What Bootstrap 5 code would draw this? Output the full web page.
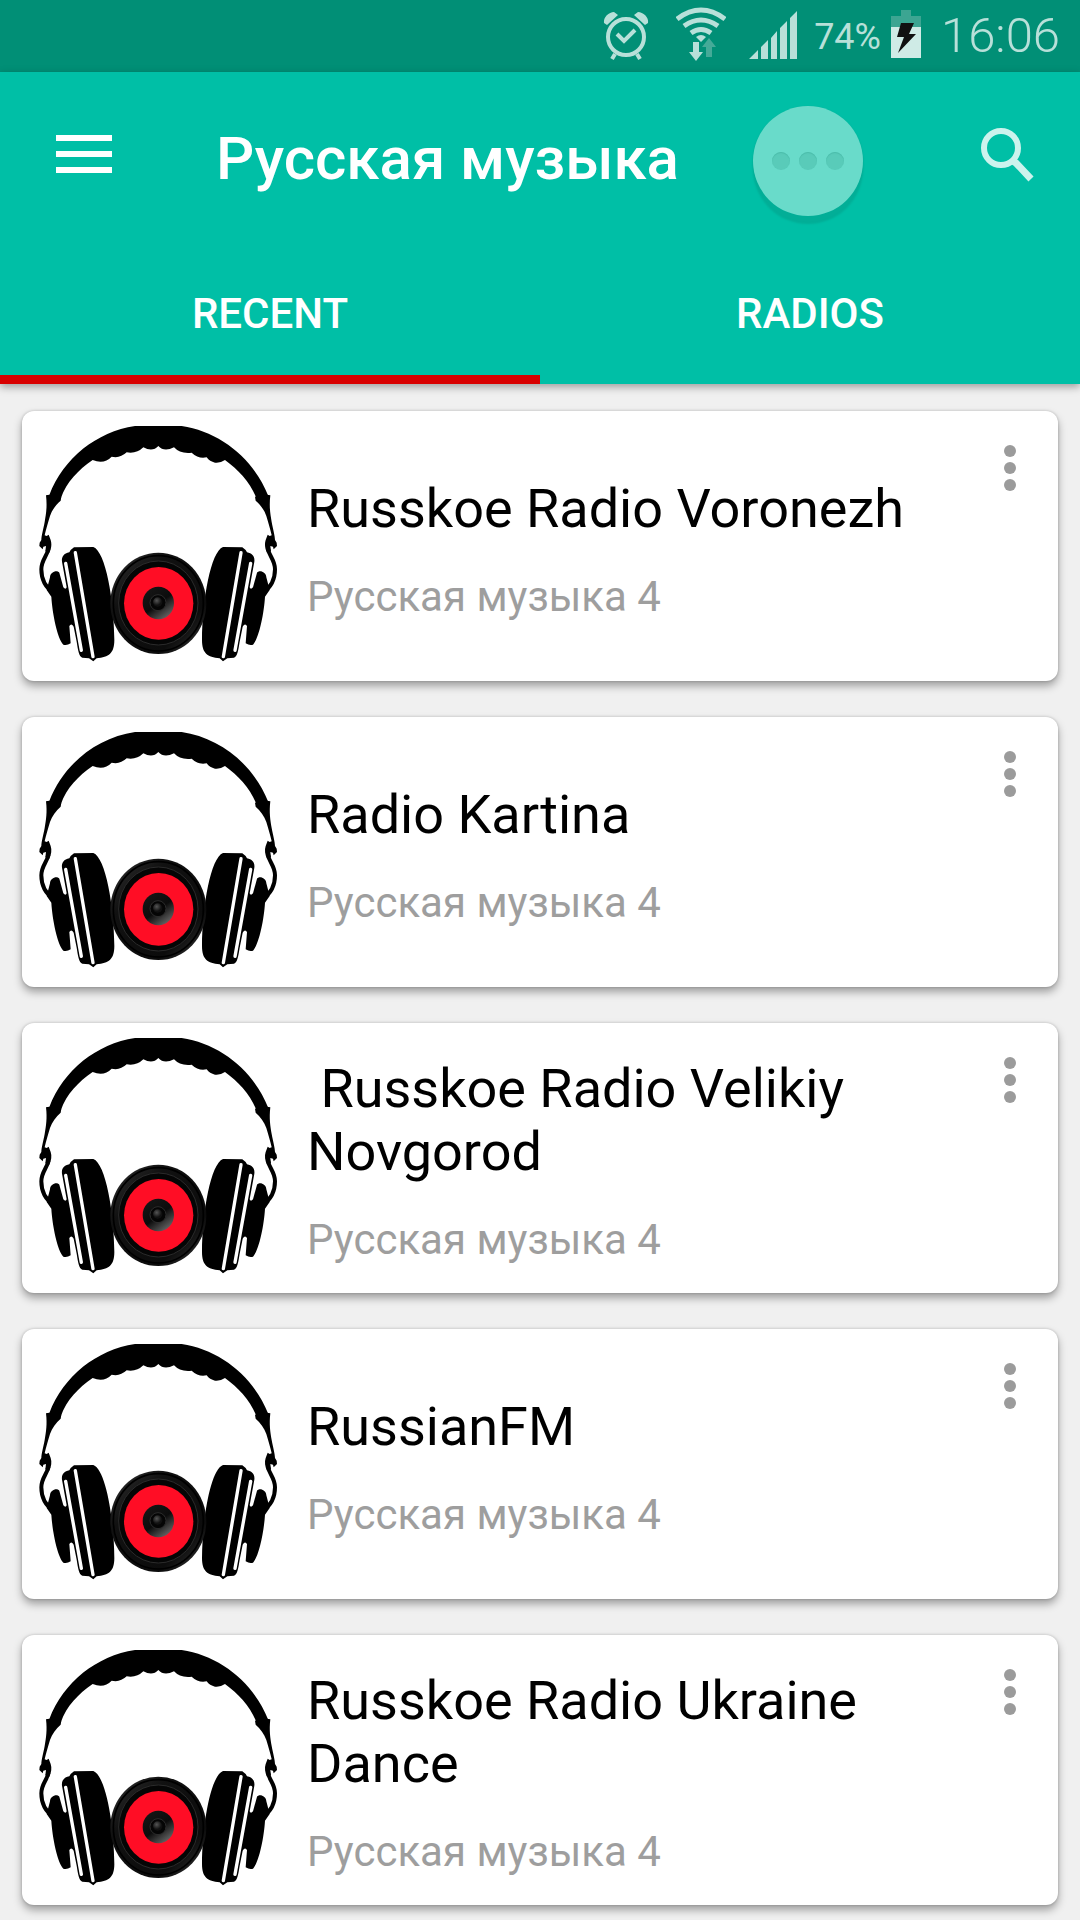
<!DOCTYPE html>
<html lang="ru">
<head>
<meta charset="utf-8">
<meta name="viewport" content="width=device-width, initial-scale=1">
<title>Русская музыка</title>
<link href="https://cdn.jsdelivr.net/npm/bootstrap@5.3.0/dist/css/bootstrap.min.css" rel="stylesheet">
<style>
  body { font-family: Roboto, "Noto Sans", sans-serif; background: #f0f0f0; color: #000; }
  svg { display: block; flex: none; }
  .status-bar { height: 72px; background: #018f76; color: #b8e0d9; padding-right: 20px; font-weight: 300; }
  .status-wifi { margin-left: 25px; }
  .status-signal { margin-left: 22px; }
  .status-percent { font-size: 36px; line-height: 40px; padding-top: 2px; margin-left: 16px; font-weight: 400; }
  .status-battery { margin-left: 10px; }
  .status-clock { font-size: 49px; line-height: 72px; margin-left: 20px; }
  .app-header { background: #00bfa6; color: #fff; box-shadow: 0 3px 8px rgba(0,0,0,.35); z-index: 2; }
  .app-bar { height: 168px; padding: 0 21px 0 32px; }
  .bar-btn { width: 104px; height: 104px; margin-top: 30px; }
  .app-title { font-size: 60px; line-height: 72px; font-weight: 500; margin: 0 0 0 80px; padding-top: 6px; }
  .assist-btn { right: 217px; top: 34px; width: 110px; height: 110px; background: #69dbca; box-shadow: 0 8px 2px #02ae97, 0 1px 2px #02a58f; gap: 9px; }
  .assist-dot { width: 18px; height: 18px; border-radius: 50%; background: #59cbb9; box-shadow: inset 0 1px 1px #4bbcaa; }
  .tab-link { height: 144px; font-size: 42px; line-height: 48px; font-weight: 500; color: #fff; text-decoration: none; border-bottom: 9px solid transparent; padding-top: 12px; }
  .tab-link.active { border-bottom-color: #d80000; }
  .station-list { padding: 27px 22px 15px; gap: 36px; }
  .station { min-height: 270px; padding: 13px 12px 17px 16px; border: 0; border-radius: 12px; box-shadow: 0 5px 9px rgba(0,0,0,.34), 0 0 3px rgba(0,0,0,.2); }
  .station-body { margin-left: 29px; gap: 32px; padding-top: 10px; }
  .station-name { font-size: 54px; line-height: 63px; font-weight: 400; margin: 0; }
  .station-group { font-size: 42px; line-height: 50px; color: #9e9e9e; margin: 0; }
  .more-btn { width: 72px; height: 72px; margin-top: 8px; }
</style>
<script src="https://cdn.jsdelivr.net/npm/bootstrap@5.3.0/dist/js/bootstrap.bundle.min.js"></script>
</head>
<body>
<svg width="0" height="0" class="position-absolute" aria-hidden="true">
  <defs>
    <linearGradient id="rim" x1="0" y1="0" x2="1" y2="1">
      <stop offset="0" stop-color="#333"/><stop offset=".3" stop-color="#111"/><stop offset=".75" stop-color="#0c0c0c"/><stop offset="1" stop-color="#3a3a3a"/>
    </linearGradient>
    <linearGradient id="cone" x1=".2" y1=".1" x2=".8" y2=".95">
      <stop offset="0" stop-color="#151515"/><stop offset=".5" stop-color="#0c0c0c"/><stop offset="1" stop-color="#666"/>
    </linearGradient>
    <radialGradient id="cap" cx=".4" cy=".35"><stop offset="0" stop-color="#555"/><stop offset="1" stop-color="#111"/></radialGradient>
    <g id="cup" transform="translate(42 270)">
      <path d="M36 16L46 14L82 20L80 32C66 44 54 60 48 78C42 98 36 118 32 136L38 138L44 134L50 150C54 162 52 176 46 188L34 184L36 168L28 170L26 178L16 168L17 158L22 150C22 138 28 118 32 96C36 72 40 50 36 16Z"/>
      <path d="M43 176C40 198 22 210 22 238C22 270 34 292 58 308" fill="none" stroke="#000" stroke-width="12"/>
      <path d="M110 180L120 172L178 171C215 185 240 330 241 450C241 490 225 501 188 505L178 514L165 505L145 503C135 500 132 480 128 455L119 410Q112 398 106 408L110 460Q98 468 88 464C70 445 55 370 52 320L38 300L48 262C48 245 70 238 76 248L88 292Q95 300 98 292L84 215C82 200 90 190 106 187Z"/>
      <path d="M124 188L177 500M95 220L142 481" fill="none" stroke="#fff" stroke-width="10" stroke-linecap="round"/>
    </g>
    <symbol id="headphones" viewBox="54 72 720 720">
      <path d="M82 296L88 285C130 175 230 95 345 78L485 78C600 95 700 175 745 288L710 296C690 245 655 210 615 180Q600 190 585 188Q569 185 560 172Q536 178 515 158Q480 162 462 142Q432 157 415 138Q398 157 370 142Q350 162 320 157Q300 176 275 170Q252 194 218 180C175 210 140 245 122 296Z"/>
      <use href="#cup"/>
      <use href="#cup" transform="translate(829) scale(-1 1)"/>
      <ellipse cx="415" cy="610" rx="144" ry="152" fill="url(#rim)"/>
      <ellipse cx="415" cy="610" rx="135" ry="143" fill="none" stroke="#000" stroke-width="5"/>
      <ellipse cx="415" cy="609" rx="119" ry="126" fill="#050505" stroke="#2b2b2b" stroke-width="3"/>
      <ellipse cx="416" cy="610" rx="104" ry="109" fill="#ff0d25"/>
      <ellipse cx="415" cy="609" rx="47" ry="49" fill="url(#cone)"/>
      <circle cx="414" cy="608" r="24" fill="#050505" stroke="#2c2c2c" stroke-width="3"/>
      <circle cx="413" cy="606" r="14" fill="url(#cap)"/>
    </symbol>
    <symbol id="more" viewBox="0 0 12 46">
      <g fill="#9b9b9b"><circle cx="6" cy="6" r="6"/><circle cx="6" cy="23" r="6"/><circle cx="6" cy="40" r="6"/></g>
    </symbol>
  </defs>
</svg>

<div class="status-bar d-flex align-items-center justify-content-end">
  <svg width="50" height="72" viewBox="601 0 50 72" fill="none" stroke="#b8e0d9" role="img" aria-label="Alarm">
    <circle cx="626" cy="37" r="18" stroke-width="4"/>
    <path d="M617 34L624 41L635 30" stroke-width="4"/>
    <path d="M615 54L612 59M637 54L640 59" stroke-width="4"/>
    <path d="M604 23C603 17 609 12 614 12L618 15L607 25ZM648 23C649 17 643 12 638 12L634 15L645 25Z" fill="#b8e0d9" stroke="none"/>
  </svg>
  <svg class="status-wifi" width="50" height="72" viewBox="676 0 50 72" fill="none" stroke="#b8e0d9" role="img" aria-label="Wi-Fi">
    <path d="M677 19Q701 1 725 19M684 26Q701 14 718 26M691 33Q701 26 711 33" stroke-width="5"/>
    <path d="M696 37Q701 33 706 37L701 42Z" fill="#b8e0d9" stroke="none"/>
    <path d="M693 42H699V52H703L696 61L689 52H693Z" fill="#b8e0d9" stroke="none"/>
    <path d="M706 57H712V47H716L709 38L702 47H706Z" fill="#45aa98" stroke="none"/>
  </svg>
  <svg class="status-signal" width="50" height="72" viewBox="748 0 50 72" fill="#b8e0d9" role="img" aria-label="Signal">
    <path d="M749 59L758 50V59ZM761 47L768 40V59H761ZM771 38L777 31V59H771ZM780 28L787 21V59H780ZM790 18L797 11V59H790Z"/>
  </svg>
  <span class="status-percent">74%</span>
  <svg class="status-battery" width="30" height="72" viewBox="891 0 30 72" role="img" aria-label="Battery charging">
    <path d="M901 10H911V16H921V28H891V16H901Z" fill="#3ca592"/>
    <path d="M891 27H921V58H891Z" fill="#cfebe6"/>
    <path d="M901 23H914L909 34H916L898 53L904 37H897Z" fill="#111"/>
  </svg>
  <time class="status-clock">16:06</time>
</div>

<header class="app-header position-relative">
  <div class="app-bar d-flex align-items-start position-relative">
    <button class="bar-btn btn p-0 border-0 d-flex align-items-center justify-content-center" type="button" aria-label="Menu">
      <svg width="56" height="50" viewBox="0 0 56 50" fill="#fff"><path d="M0 6H56V12H0ZM0 22H56V28H0ZM0 38H56V44H0Z"/></svg>
    </button>
    <h1 class="app-title align-self-center">Русская музыка</h1>
    <button class="assist-btn btn p-0 border-0 rounded-circle position-absolute d-flex align-items-center justify-content-center" type="button" aria-label="Assistant">
      <span class="assist-dot"></span><span class="assist-dot"></span><span class="assist-dot"></span>
    </button>
    <button class="bar-btn btn p-0 border-0 d-flex align-items-center justify-content-center ms-auto" type="button" aria-label="Search">
      <svg width="72" height="72" viewBox="971 118 72 72" fill="none" stroke="#ccf3ed"><circle cx="1001" cy="148" r="17" stroke-width="6"/><path d="M1013 161L1016 163L1031 179" stroke-width="7"/></svg>
    </button>
  </div>
  <nav class="row g-0 text-center" aria-label="Lists">
    <a class="tab-link active col-6 d-flex align-items-center justify-content-center" href="#recent" aria-current="page">RECENT</a>
    <a class="tab-link col-6 d-flex align-items-center justify-content-center" href="#radios">RADIOS</a>
  </nav>
</header>

<main id="recent" class="station-list d-flex flex-column">
  <article class="station card flex-row">
    <svg width="240" height="240" aria-hidden="true"><use href="#headphones"/></svg>
    <div class="station-body flex-fill d-flex flex-column justify-content-center">
      <h2 class="station-name">Russkoe Radio Voronezh</h2>
      <p class="station-group">Русская музыка 4</p>
    </div>
    <button class="more-btn btn p-0 border-0 d-flex align-items-center justify-content-center flex-shrink-0" type="button" aria-label="More"><svg width="12" height="46"><use href="#more"/></svg></button>
  </article>
  <article class="station card flex-row">
    <svg width="240" height="240" aria-hidden="true"><use href="#headphones"/></svg>
    <div class="station-body flex-fill d-flex flex-column justify-content-center">
      <h2 class="station-name">Radio Kartina</h2>
      <p class="station-group">Русская музыка 4</p>
    </div>
    <button class="more-btn btn p-0 border-0 d-flex align-items-center justify-content-center flex-shrink-0" type="button" aria-label="More"><svg width="12" height="46"><use href="#more"/></svg></button>
  </article>
  <article class="station card flex-row">
    <svg width="240" height="240" aria-hidden="true"><use href="#headphones"/></svg>
    <div class="station-body flex-fill d-flex flex-column justify-content-center">
      <h2 class="station-name">&nbsp;Russkoe Radio Velikiy Novgorod</h2>
      <p class="station-group">Русская музыка 4</p>
    </div>
    <button class="more-btn btn p-0 border-0 d-flex align-items-center justify-content-center flex-shrink-0" type="button" aria-label="More"><svg width="12" height="46"><use href="#more"/></svg></button>
  </article>
  <article class="station card flex-row">
    <svg width="240" height="240" aria-hidden="true"><use href="#headphones"/></svg>
    <div class="station-body flex-fill d-flex flex-column justify-content-center">
      <h2 class="station-name">RussianFM</h2>
      <p class="station-group">Русская музыка 4</p>
    </div>
    <button class="more-btn btn p-0 border-0 d-flex align-items-center justify-content-center flex-shrink-0" type="button" aria-label="More"><svg width="12" height="46"><use href="#more"/></svg></button>
  </article>
  <article class="station card flex-row">
    <svg width="240" height="240" aria-hidden="true"><use href="#headphones"/></svg>
    <div class="station-body flex-fill d-flex flex-column justify-content-center">
      <h2 class="station-name">Russkoe Radio Ukraine Dance</h2>
      <p class="station-group">Русская музыка 4</p>
    </div>
    <button class="more-btn btn p-0 border-0 d-flex align-items-center justify-content-center flex-shrink-0" type="button" aria-label="More"><svg width="12" height="46"><use href="#more"/></svg></button>
  </article>
</main>
</body>
</html>
